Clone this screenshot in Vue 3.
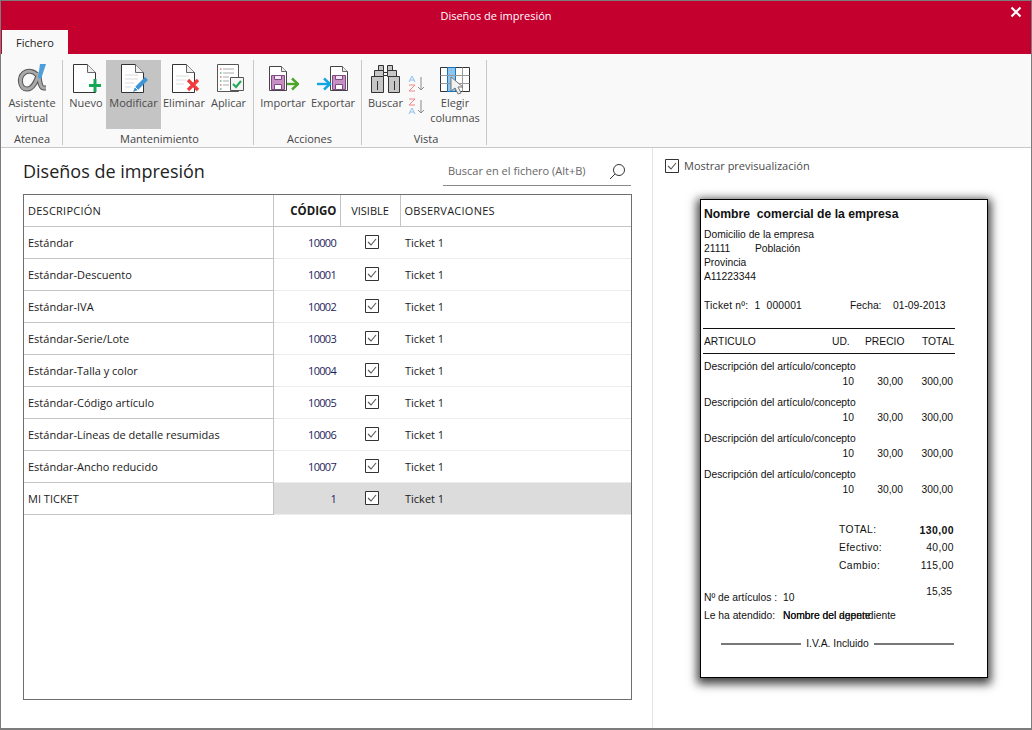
<template>
  <div class="window">
    <header class="titlebar">
      <div class="title">Diseños de impresión</div>
      <svg class="close" width="12" height="12" viewBox="0 0 12 12">
        <path d="M1.5 1.5l9 9M10.5 1.5l-9 9" stroke="#fff" stroke-width="2.2" fill="none" />
      </svg>
      <div class="tabs"><div class="tab">Fichero</div></div>
    </header>

    <section class="ribbon">
      <div class="group g-atenea">
        <div class="btns">
          <div class="btn w60">
            <svg class="ico" width="34" height="32" viewBox="0 0 34 32">
              <path d="M22 12C19 8 13 7 9 10c-6 5-4 16 3 16 6 0 9-7 12-16 0 6 1 15 5 15h2" fill="none" stroke="#555" stroke-width="5" />
              <path d="M22 12C19 8 13 7 9 10c-6 5-4 16 3 16 6 0 9-7 12-16 0 6 1 15 5 15h2" fill="none" stroke="#a9a9a9" stroke-width="3" />
              <path d="M25 1h6l-5 15-3-1z" fill="#4d9fdc" />
            </svg>
            <span>Asistente<br />virtual</span>
          </div>
        </div>
        <div class="glabel">Atenea</div>
      </div>

      <div class="group g-mant">
        <div class="btns">
          <div class="btn w40">
            <svg class="ico" width="32" height="32" viewBox="0 0 32 32">
              <path d="M3.5 1.5h14l8 8v20h-22z" fill="#fff" stroke="#333" />
              <path d="M17.5 1.5v8h8" fill="#eee" stroke="#666" />
              <path d="M25 16v13M19 22.5h12" stroke="#17a556" stroke-width="3" fill="none" />
            </svg>
            <span>Nuevo</span>
          </div>
          <div class="btn w55 active">
            <svg class="ico" width="32" height="32" viewBox="0 0 32 32">
              <path d="M3.5 1.5h14l8 8v20h-22z" fill="#fff" stroke="#333" />
              <path d="M17.5 1.5v8h8" fill="#eee" stroke="#666" />
              <path d="M7 12h13M7 16h13M7 20h9M7 24h6" stroke="#d9d9d9" fill="none" />
              <path d="M27 14l3 3-10 10-5 2 2-5z" fill="#3f94d6" />
              <path d="M17 24l3 3" stroke="#fff" fill="none" />
            </svg>
            <span>Modificar</span>
          </div>
          <div class="btn w46">
            <svg class="ico" width="32" height="32" viewBox="0 0 32 32">
              <path d="M4.5 1.5h14l8 8v20h-22z" fill="#fff" stroke="#333" />
              <path d="M18.5 1.5v8h8" fill="#eee" stroke="#666" />
              <path d="M8 13h13M8 17h10M8 21h8" stroke="#ddd" fill="none" />
              <path d="M20 17l10 10M30 17L20 27" stroke="#ef3b3b" stroke-width="3.2" fill="none" />
            </svg>
            <span>Eliminar</span>
          </div>
          <div class="btn w43">
            <svg class="ico" width="32" height="32" viewBox="0 0 32 32">
              <path d="M4.5 1.5h21v27h-21z" fill="#fff" stroke="#555" />
              <path d="M10 6h11M10 10h11M10 14h6M10 18h6M10 22h6" stroke="#aaa" fill="none" />
              <path d="M7 6h1.5M7 14h1.5M7 22h1.5" stroke="#d33" fill="none" />
              <path d="M7 10h1.5M7 18h1.5M7 26h1.5" stroke="#183" fill="none" />
              <path d="M17.5 14.5h13v13h-13z" fill="#f4f4f4" stroke="#555" />
              <path d="M20 21l3 3 5-6" stroke="#1fa75a" stroke-width="2" fill="none" />
            </svg>
            <span>Aplicar</span>
          </div>
        </div>
        <div class="glabel">Mantenimiento</div>
      </div>

      <div class="group g-acc">
        <div class="btns">
          <div class="btn w50">
            <svg class="ico" width="32" height="32" viewBox="0 0 32 32">
              <path d="M2.5 3.5h12l5 5v19h-17z" fill="#fff" stroke="#444" />
              <path d="M14.5 3.5v5h5" fill="#eee" stroke="#666" />
              <path d="M4.5 12.5h13v14h-13z" fill="#c78fc4" stroke="#7d4a82" />
              <path d="M7.5 12.5h7v4h-7z" fill="#f4e6f3" stroke="#7d4a82" />
              <path d="M7.5 21.5h7v5h-7z" fill="#fff" stroke="#7d4a82" />
              <path d="M20 21h10" stroke="#4ea529" stroke-width="2.4" fill="none" />
              <path d="M25 15.5l6 5.5-6 5.5" stroke="#4ea529" stroke-width="2.4" fill="none" />
            </svg>
            <span>Importar</span>
          </div>
          <div class="btn w50">
            <svg class="ico" width="32" height="32" viewBox="0 0 32 32">
              <path d="M13.5 3.5h12l5 5v19h-17z" fill="#fff" stroke="#444" />
              <path d="M25.5 3.5v5h5" fill="#eee" stroke="#666" />
              <path d="M15.5 12.5h13v14h-13z" fill="#c78fc4" stroke="#7d4a82" />
              <path d="M18.5 12.5h7v4h-7z" fill="#f4e6f3" stroke="#7d4a82" />
              <path d="M18.5 21.5h7v5h-7z" fill="#fff" stroke="#7d4a82" />
              <path d="M0 21h13" stroke="#12a5e3" stroke-width="2.4" fill="none" />
              <path d="M7 15.5l6 5.5-6 5.5" stroke="#12a5e3" stroke-width="2.4" fill="none" />
            </svg>
            <span>Exportar</span>
          </div>
        </div>
        <div class="glabel">Acciones</div>
      </div>

      <div class="group g-vista">
        <div class="btns">
          <div class="btn w39">
            <svg class="ico" width="32" height="32" viewBox="0 0 32 32">
              <path d="M8.5 2.5h5v5h-5zM17.5 2.5h5v5h-5z" fill="#c6c6c6" stroke="#333" />
              <path d="M4.5 7.5h9v6h-9zM17.5 7.5h9v6h-9z" fill="#c6c6c6" stroke="#333" />
              <path d="M13.5 9.5h4v3h-4z" fill="#fff" stroke="#333" />
              <path d="M1.5 13.5h12v16h-12zM18.5 13.5h11v16h-11z" fill="#c6c6c6" stroke="#333" />
              <path d="M7.5 18v9M24.5 18v9" stroke="#333" fill="none" />
            </svg>
            <span>Buscar</span>
          </div>
          <div class="sorts">
            <svg width="18" height="17" viewBox="0 0 18 17">
              <path d="M1 7l3-6 3 6M2 5h4" stroke="#8fc1ec" fill="none" />
              <path d="M1 10h6l-6 6h6" stroke="#f08585" fill="none" />
              <path d="M13 2v13M10 12l3 3 3-3" stroke="#888" fill="none" />
            </svg>
            <svg width="18" height="17" viewBox="0 0 18 17">
              <path d="M1 1h6l-6 6h6" stroke="#f08585" fill="none" />
              <path d="M1 16l3-6 3 6M2 14h4" stroke="#8fc1ec" fill="none" />
              <path d="M13 2v13M10 12l3 3 3-3" stroke="#888" fill="none" />
            </svg>
          </div>
          <div class="btn w50">
            <svg class="ico" width="32" height="32" viewBox="0 0 32 32">
              <path d="M1.5 4.5h29v24h-29z" fill="#fff" stroke="#333" />
              <path d="M8.5 4.5h8v24h-8z" fill="#8ec5ee" stroke="#1a75bb" />
              <path d="M1.5 12.5h29M1.5 20.5h29M23.5 4.5v24" stroke="#999" fill="none" />
              <path d="M12 14v14l4-3 3 6 3-1-3-6h5z" fill="#f2f2f2" stroke="#777" />
            </svg>
            <span>Elegir<br />columnas</span>
          </div>
        </div>
        <div class="glabel">Vista</div>
      </div>
    </section>

    <main class="content">
      <section class="left">
        <div class="head">
          <h1>Diseños de impresión</h1>
          <div class="search">
            <span>Buscar en el fichero (Alt+B)</span>
            <svg width="17" height="17" viewBox="0 0 17 17">
              <circle cx="10" cy="7" r="5.5" fill="none" stroke="#333" />
              <path d="M6 11l-5 5" stroke="#333" fill="none" />
            </svg>
          </div>
        </div>

        <div class="table-box">
          <table>
            <colgroup>
              <col class="c1" /><col class="c2" /><col class="c3" /><col />
            </colgroup>
            <thead>
              <tr>
                <th class="wide">DESCRIPCIÓN</th>
                <th class="num"><b>CÓDIGO</b></th>
                <th class="ctr">VISIBLE</th>
                <th class="wide">OBSERVACIONES</th>
              </tr>
            </thead>
            <tbody>
              <tr v-for="row in rows" :key="row.code" :class="{ selected: row.selected }">
                <td class="desc">{{ row.name }}</td>
                <td class="num code">{{ row.code }}</td>
                <td class="ctr">
                  <svg class="check" width="14" height="14" viewBox="0 0 14 14">
                    <path d="M.5.5h13v13H.5z" fill="#fff" stroke="#333" />
                    <path d="M3 7l3 3 5-6" fill="none" stroke="#555" stroke-width="1.1" />
                  </svg>
                </td>
                <td class="obs">Ticket 1</td>
              </tr>
            </tbody>
          </table>
        </div>
      </section>

      <aside class="right">
        <label class="preview-check">
          <svg width="14" height="14" viewBox="0 0 14 14">
            <path d="M.5.5h13v13H.5z" fill="#fff" stroke="#333" />
            <path d="M3 7l3 3 5-6" fill="none" stroke="#555" stroke-width="1.1" />
          </svg>
          Mostrar previsualización
        </label>

        <div class="paper">
          <div class="p-title">Nombre&nbsp; comercial de la empresa</div>
          <div class="p-line">Domicilio de la empresa</div>
          <div class="p-line"><span class="cp">21111</span>Población</div>
          <div class="p-line">Provincia</div>
          <div class="p-line">A11223344</div>
          <div class="p-line ticket-no">
            <span class="tn">Ticket nº:&nbsp; 1&nbsp; 000001</span>
            <span>Fecha:&nbsp;&nbsp;&nbsp; 01-09-2013</span>
          </div>
          <div class="rule first"></div>
          <div class="p-cols heading">
            <span>ARTICULO</span><span class="ud">UD.</span><span class="pr">PRECIO</span><span class="to">TOTAL</span>
          </div>
          <div class="rule"></div>
          <div v-for="n in 4" :key="n" class="item">
            <div class="p-item">Descripción del artículo/concepto</div>
            <div class="p-cols nums">
              <span></span><span>10</span><span>30,00</span><span>300,00</span>
            </div>
          </div>
          <div class="totals">
            <div v-for="t in totals" :key="t.label" class="total-row">
              <span>{{ t.label }}</span><span :class="{ strong: t.strong }">{{ t.value }}</span>
            </div>
          </div>
          <div class="foot">
            <div class="p-line art"><span class="fl">Nº de artículos :</span>10</div>
            <div class="p-line"><span class="fl">Le ha atendido:</span>
              <span class="overlap">Nombre del dependiente<b>Nombre del agente</b></span>
            </div>
            <span class="extra">15,35</span>
          </div>
          <div class="iva"><i></i><span>I.V.A. Incluido</span><i></i></div>
        </div>
      </aside>
    </main>
  </div>
</template>

<script setup>
const names = [
  ['Estándar', '10000'],
  ['Estándar-Descuento', '10001'],
  ['Estándar-IVA', '10002'],
  ['Estándar-Serie/Lote', '10003'],
  ['Estándar-Talla y color', '10004'],
  ['Estándar-Código artículo', '10005'],
  ['Estándar-Líneas de detalle resumidas', '10006'],
  ['Estándar-Ancho reducido', '10007'],
  ['MI TICKET', '1']
]
const rows = names.map(([name, code]) => ({ name, code, selected: code === '1' }))

const totals = [
  { label: 'TOTAL:', value: '130,00', strong: true },
  { label: 'Efectivo:', value: '40,00' },
  { label: 'Cambio:', value: '115,00' }
]
</script>

<style>
html, body { margin: 0; background: #fff; }
</style>

<style scoped>
.window {
  width: 1032px;
  height: 730px;
  box-sizing: border-box;
  border: 1px solid #7c7c7c;
  border-bottom-width: 2px;
  display: flex;
  flex-direction: column;
  overflow: hidden;
  font-family: "Open Sans", "Noto Sans", sans-serif;
  font-size: 11px;
  color: #1a1a1a;
  background: #fff;
}
.titlebar {
  position: relative;
  height: 53px;
  flex: none;
  background: #c4002f;
  display: flex;
  flex-direction: column;
}
.title {
  height: 29px;
  line-height: 30px;
  padding-right: 40px;
  text-align: center;
  color: #fff;
  font-size: 11px;
}
.close { position: absolute; top: 5px; right: 9px; }
.tabs { flex: 1; display: flex; align-items: flex-end; padding-left: 1px; }
.tab {
  width: 66px;
  height: 24px;
  line-height: 25px;
  text-align: center;
  background: #f9f9f9;
  color: #222;
}

.ribbon {
  height: 94px;
  flex: none;
  box-sizing: border-box;
  display: flex;
  background: #f9f9f9;
  border-bottom: 1px solid #c8c8c8;
  padding: 6px 0 0 1px;
}
.group {
  height: 85px;
  box-sizing: border-box;
  border-right: 1px solid #c8c8c8;
  display: flex;
  flex-direction: column;
  align-items: stretch;
}
.g-atenea { width: 61px; }
.g-mant { width: 191px; padding-left: 3px; }
.g-acc { width: 108px; padding-left: 4px; }
.g-vista { width: 125px; padding-left: 4px; }
.btns { display: flex; height: 69px; flex: none; }
.btn {
  box-sizing: border-box;
  padding-top: 3px;
  display: flex;
  flex-direction: column;
  align-items: center;
  text-align: center;
  line-height: 15px;
  color: #4a4a4a;
  white-space: nowrap;
}
.ico { display: block; flex: none; }
.w60 { width: 60px; }
.w40 { width: 40px; }
.w55 { width: 55px; }
.w46 { width: 46px; }
.w43 { width: 43px; }
.w50 { width: 50px; }
.w39 { width: 39px; }
.active { background: #c4c4c4; }
.sorts {
  width: 25px;
  padding: 15px 0 0 3px;
  box-sizing: border-box;
  display: flex;
  flex-direction: column;
  gap: 6px;
}
.sorts svg { display: block; flex: none; }
.glabel {
  margin-top: 2px;
  text-align: center;
  line-height: 16px;
  height: 14px;
  color: #444;
}

.content { flex: 1; display: flex; min-height: 0; }
.left {
  width: 652px;
  flex: none;
  box-sizing: border-box;
  border-right: 1px solid #e4e4e4;
  padding: 0 20px 28px 22px;
  display: flex;
  flex-direction: column;
}
.head {
  height: 46px;
  flex: none;
  display: flex;
  justify-content: space-between;
  align-items: flex-start;
}
h1 {
  margin: 10px 0 0;
  font-size: 18px;
  font-weight: 400;
  line-height: 26px;
  color: #222;
}
.search {
  width: 188px;
  height: 37px;
  margin: 1px 1px 0 0;
  box-sizing: border-box;
  padding: 14px 5px 0 5px;
  border-bottom: 1px solid #8a8a8a;
  display: flex;
  justify-content: space-between;
  align-items: flex-start;
  color: #666;
  font-size: 11px;
  line-height: 15px;
}
.table-box {
  flex: 1;
  border: 1px solid #6e6e6e;
  min-height: 0;
  background: #fff;
}
table {
  width: 100%;
  table-layout: fixed;
  border-collapse: collapse;
}
.c1 { width: 249px; }
.c2 { width: 67px; }
.c3 { width: 60px; }
th, td {
  height: 32px;
  box-sizing: border-box;
  padding: 0 4px;
  text-align: left;
  font-weight: 400;
  border-bottom: 1px solid #ececec;
  border-right: none;
  white-space: nowrap;
}
th {
  height: 31px;
  border-bottom: 1px solid #c4c4c4;
  border-right: 1px solid #c4c4c4;
}
th.wide { letter-spacing: .25px; }
th:last-child { border-right: none; }
th b { font-weight: 700; font-size: 11.5px; position: relative; left: 1px; }
.num { text-align: right; }
th.ctr, .ctr { text-align: center; }
td.desc { border-right: 1px solid #c4c4c4; border-bottom-color: #c4c4c4; }
.code { color: #1d1d5a; letter-spacing: -.7px; }
td.obs { padding-left: 5px; }
.check { display: block; margin: 0 auto; position: relative; left: 2px; }
.selected td { background: #dcdcdc; }
.selected td.desc { background: #fff; }

.right { flex: 1; min-width: 0; padding: 10px 0 0 12px; }
.preview-check {
  display: flex;
  align-items: center;
  gap: 5px;
  height: 15px;
  color: #4a4a4a;
}
.paper {
  width: 288px;
  height: 479px;
  box-sizing: border-box;
  margin: 26px 0 0 35px;
  padding: 5px 0 0 3px;
  border: 1px solid #000;
  background: #fff;
  box-shadow: 0 3px 9px 3px rgba(0, 0, 0, .75);
  font-family: "Liberation Sans", Arial, sans-serif;
  font-size: 10.3px;
  color: #111;
  position: relative;
}
.p-title { font-size: 12.2px; font-weight: 700; line-height: 18px; height: 16px; margin-bottom: 6px; }
.p-line { height: 14px; line-height: 16px; white-space: nowrap; }
.cp { display: inline-block; width: 51px; }
.ticket-no { margin-top: 15px; display: flex; }
.tn { width: 146px; letter-spacing: .2px; }
.rule { width: 252px; height: 1px; background: #111; margin: 5px 0 5px -1px; }
.rule.first { margin-top: 16px; }
.p-cols { display: flex; height: 14px; line-height: 16px; width: 252px; }
.p-cols span:first-child { flex: 1; }
.heading .ud { width: 33px; }
.heading .pr { width: 57px; }
.heading .to { width: 34px; }
.nums { height: 15px; line-height: 15px; width: 249px; }
.nums span { text-align: right; }
.nums span:nth-child(2) { width: 22px; }
.nums span:nth-child(3) { width: 49px; }
.nums span:nth-child(4) { width: 50px; }
.item { margin-bottom: 6px; }
.p-item { height: 15px; line-height: 15px; white-space: nowrap; }
.totals { margin: 23px 0 0 135px; width: 115px; }
.total-row {
  height: 18px;
  line-height: 20px;
  display: flex;
  justify-content: space-between;
  letter-spacing: .4px;
}
.strong { font-weight: 700; font-size: 10.5px; }
.foot { position: relative; margin-top: 16px; }
.foot .p-line + .p-line { margin-top: 4px; }
.fl { display: inline-block; width: 79px; }
.overlap { position: relative; display: inline-block; }
.overlap b { position: absolute; left: 0; top: 0; font-weight: 400; }
.extra { position: absolute; right: 35px; top: -4px; }
.iva {
  margin: 15px 0 0 17px;
  width: 233px;
  display: flex;
  align-items: center;
  gap: 5px;
  height: 14px;
  line-height: 14px;
  white-space: nowrap;
}
.iva i { flex: 1; height: 2px; background: #777; }
</style>
